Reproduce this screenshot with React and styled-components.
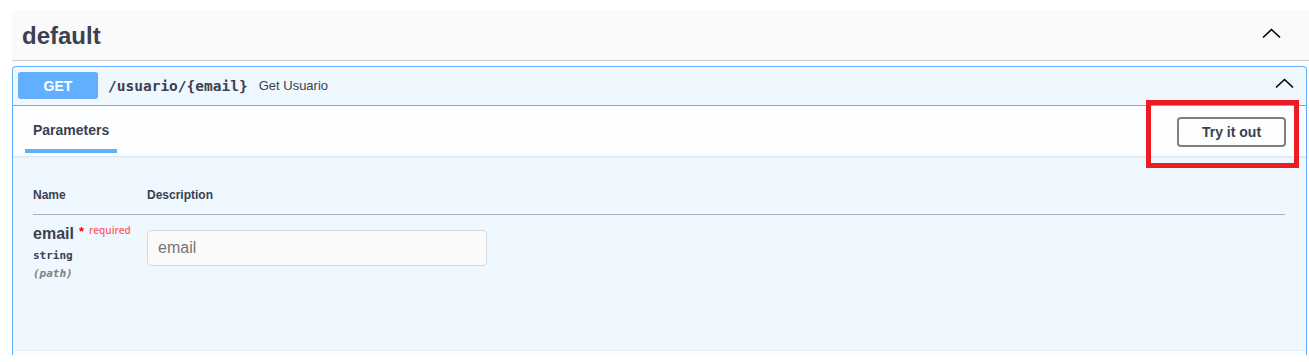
import styled, { createGlobalStyle } from 'styled-components';

const GlobalStyle = createGlobalStyle`
	html, body {
		margin: 0;
		padding: 0;
		background: #fff;
		font-family: "Liberation Sans", Arial, sans-serif;
		color: #3b4151;
	}
	* {
		box-sizing: border-box;
	}
`;

const Page = styled.div`
	position: relative;
	height: 355px;
	padding: 10px 0 0 12px;
	overflow: hidden;
`;

const TagHeader = styled.div`
	display: flex;
	align-items: center;
	justify-content: space-between;
	height: 51px;
	padding: 0 28px 0 10px;
	background: #fafafa;
	border-bottom: 1px solid #cbcdd1;
`;

const TagTitle = styled.h3`
	margin: 1px 0 0;
	font-size: 24px;
	font-weight: 700;
	color: #3b4151;
`;

const Opblock = styled.div`
	margin: 5px 2px 0 0;
	border: 1px solid #61affe;
	border-bottom: none;
	border-radius: 4px 4px 0 0;
	background: #eff7ff;
`;

const Summary = styled.div`
	display: flex;
	align-items: center;
	padding: 5px 5px 6px;
	border-bottom: 1px solid #61affe;
`;

const Method = styled.span`
	display: flex;
	align-items: center;
	justify-content: center;
	width: 80px;
	height: 27px;
	border-radius: 3px;
	background: #61affe;
	color: #fff;
	font-size: 14px;
	font-weight: 700;
`;

const Path = styled.span`
	margin-left: 10px;
	font-family: "DejaVu Sans Mono", "Liberation Mono", monospace;
	font-size: 14.5px;
	font-weight: 700;
	color: #3b4151;
`;

const Summ = styled.span`
	margin-left: 11px;
	font-size: 13px;
	color: #3b4151;
`;

const ChevronBox = styled.span`
	display: flex;
	margin-left: ${(p) => (p.$push ? 'auto' : '0')};
	margin-right: ${(p) => p.$right || 0}px;
	margin-bottom: ${(p) => p.$lift || 0}px;
`;

const SectionHeader = styled.div`
	display: flex;
	align-items: center;
	justify-content: space-between;
	height: 50px;
	padding: 0 20px 0 12px;
	background: rgba(255, 255, 255, 0.8);
	box-shadow: 0 1px 2px rgba(0, 0, 0, 0.1);
`;

const Tab = styled.h4`
	position: relative;
	margin: 0 0 2px;
	padding: 0 8px;
	font-size: 14px;
	font-weight: 700;
	color: #3b4151;

	&:after {
		content: "";
		position: absolute;
		left: 0;
		right: 0;
		bottom: -15px;
		height: 4px;
		background: #61affe;
	}
`;

const TryButton = styled.button`
	width: 109px;
	height: 30px;
	margin-top: 1px;
	border: 2px solid #808080;
	border-radius: 4px;
	background: transparent;
	font-family: "Liberation Sans", Arial, sans-serif;
	font-size: 14px;
	font-weight: 700;
	color: #3b4151;
`;

const ParamsBody = styled.div`
	height: 194px;
	padding: 20px 21px 0 20px;
`;

const Table = styled.table`
	width: 100%;
	border-collapse: collapse;
`;

const Th = styled.th`
	width: ${(p) => p.$w || 'auto'};
	padding: 12px 0;
	text-align: left;
	font-size: 12px;
	font-weight: 700;
	color: #3b4151;
	border-bottom: 1px solid #a9b0bf;
`;

const Td = styled.td`
	padding: 10px 0 0;
	vertical-align: top;
`;

const ParamName = styled.div`
	font-size: 16px;
	font-weight: 700;
	color: #3b4151;
	line-height: 18px;
`;

const Star = styled.span`
	position: relative;
	top: -3px;
	margin-left: 5px;
	font-size: 13px;
	color: red;
`;

const Required = styled.span`
	position: relative;
	top: -5px;
	margin-left: 5px;
	font-family: "Open Sans", "Liberation Sans", sans-serif;
	font-size: 10px;
	font-weight: 600;
	color: #ff5f5f;
`;

const ParamType = styled.div`
	margin-top: 5px;
	font-family: "DejaVu Sans Mono", "Liberation Mono", monospace;
	font-size: 11px;
	font-weight: 700;
	color: #3b4151;
`;

const ParamIn = styled.div`
	margin-top: 5px;
	font-family: "DejaVu Sans Mono", "Liberation Mono", monospace;
	font-size: 11px;
	font-style: italic;
	font-weight: 700;
	color: #808080;
`;

const Input = styled.input`
	display: block;
	width: 340px;
	height: 36px;
	margin-top: 5px;
	padding: 0 10px;
	border: 1px solid #d9d9d9;
	border-radius: 4px;
	background: #fafafa;
	font-family: "Liberation Sans", Arial, sans-serif;
	font-size: 16px;
	color: #3b4151;

	&::placeholder {
		color: #757575;
	}
`;

const NextSection = styled.div`
	height: 8px;
	background: #f8fbff;
	border-top: 1px solid #e6f0fb;
`;

const Highlight = styled.div`
	position: absolute;
	left: 1146px;
	top: 100px;
	width: 153px;
	height: 68px;
	border: 5px solid #ed1c24;
`;

function Chevron() {
	return (
		<svg width="19" height="11" viewBox="0 0 19 11">
			<path d="M1 9.5 L9.5 1.5 L18 9.5" fill="none" stroke="#000" strokeWidth="1.6" />
		</svg>
	);
}

export default function App() {
	return (
		<>
			<GlobalStyle />
			<Page>
				<TagHeader>
					<TagTitle>default</TagTitle>
					<ChevronBox $lift={3}>
						<Chevron />
					</ChevronBox>
				</TagHeader>
				<Opblock>
					<Summary>
						<Method>GET</Method>
						<Path>/usuario/&#123;email&#125;</Path>
						<Summ>Get Usuario</Summ>
						<ChevronBox $push $right={7} $lift={4}>
							<Chevron />
						</ChevronBox>
					</Summary>
					<SectionHeader>
						<Tab>Parameters</Tab>
						<TryButton>Try it out</TryButton>
					</SectionHeader>
					<ParamsBody>
						<Table>
							<thead>
								<tr>
									<Th $w="114px">Name</Th>
									<Th>Description</Th>
								</tr>
							</thead>
							<tbody>
								<tr>
									<Td>
										<ParamName>
											email
											<Star>*</Star>
											<Required>required</Required>
										</ParamName>
										<ParamType>string</ParamType>
										<ParamIn>(path)</ParamIn>
									</Td>
									<Td>
										<Input placeholder="email" />
									</Td>
								</tr>
							</tbody>
						</Table>
					</ParamsBody>
					<NextSection />
				</Opblock>
				<Highlight />
			</Page>
		</>
	);
}
